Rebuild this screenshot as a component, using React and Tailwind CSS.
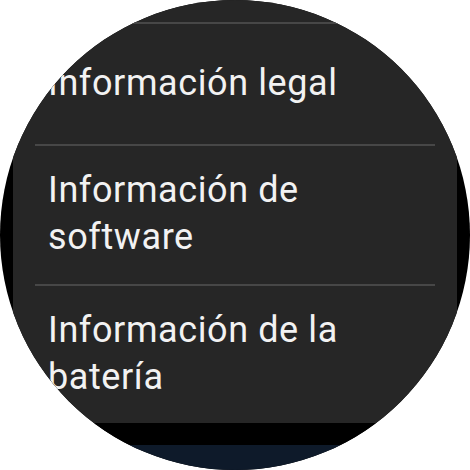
import React from 'react';

const items = [
  { id: 'legal', label: 'Información legal', minH: 'min-h-[120px]' },
  { id: 'software', label: 'Información de software', minH: 'min-h-[138px]', lines: ['Información de', 'software'] },
  { id: 'battery', label: 'Información de la batería', minH: 'min-h-[138px]', lines: ['Información de la', 'batería'] },
];

function ListItem({ item }) {
  return (
    <div>
      <div className="mx-[22px] h-[2px] bg-[#474747]" />
      <div className={`flex flex-col justify-center ${item.minH} pl-[35px] pr-6 pb-[2px]`}>
        {(item.lines || [item.label]).map((line) => (
          <span key={line} className="block text-[36px] leading-[47px] tracking-[0.6px] text-[#f2f2f2] whitespace-nowrap">
            {line}
          </span>
        ))}
      </div>
    </div>
  );
}

export default function App() {
  return (
    <div className="w-[470px] h-[470px] bg-white" style={{ fontFamily: 'Roboto, "Noto Sans", sans-serif' }}>
      <div className="w-[470px] h-[470px] rounded-full overflow-hidden bg-black flex flex-col">
        {/* settings card, scrolled part way down */}
        <div className="mx-[13px] h-[423px] shrink-0 bg-[#262626] pt-[22px] overflow-hidden">
          {items.map((item) => (
            <ListItem key={item.id} item={item} />
          ))}
        </div>
        <div className="h-[22px] shrink-0 bg-black" />
        <div className="flex-1 bg-[#0e1a2a]" />
      </div>
    </div>
  );
}
